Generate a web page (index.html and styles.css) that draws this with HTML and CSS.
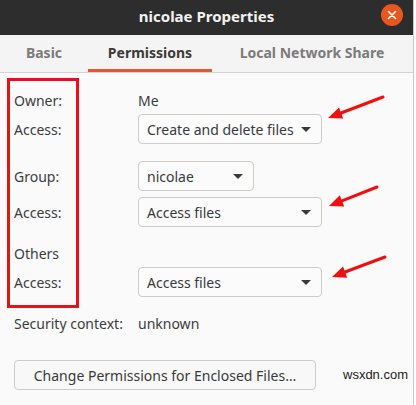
FILE: index.html
```html
<!DOCTYPE html>
<html lang="en">
  <head>
    <meta charset="UTF-8" />
    <title>nicolae Properties</title>
    <link rel="stylesheet" href="styles.css">
  </head>
  <body>
    <div class="window">
      <!-- title bar -->
      <div class="titlebar">
        <span class="title">nicolae Properties</span>
        <span class="close">
          <svg width="10" height="10" viewBox="0 0 10 10">
            <path d="M1.5 1.5 L8.5 8.5 M8.5 1.5 L1.5 8.5" stroke="#fff" stroke-width="1.6" stroke-linecap="round" />
          </svg>
        </span>
      </div>

      <!-- tabs -->
      <div class="tabs">
        <span class="tab tab-basic">Basic</span>
        <span class="tab tab-perm active">Permissions</span>
        <span class="tab tab-share">Local Network Share</span>
      </div>

      <div class="content">
        <div class="row row-owner">
          <span class="label">Owner:</span>
          <span class="value">Me</span>
        </div>
        <div class="row row-access1">
          <span class="label">Access:</span>
          <span class="combo combo-auto">Create and delete files<i class="arrow"></i></span>
        </div>
        <div class="row row-group">
          <span class="label">Group:</span>
          <span class="combo combo-small">nicolae<i class="arrow"></i></span>
        </div>
        <div class="row row-access2">
          <span class="label">Access:</span>
          <span class="combo combo-wide">Access files<i class="arrow"></i></span>
        </div>
        <div class="row row-others">
          <span class="label">Others</span>
        </div>
        <div class="row row-access3">
          <span class="label">Access:</span>
          <span class="combo combo-wide">Access files<i class="arrow"></i></span>
        </div>
        <div class="row row-security">
          <span class="label">Security context:</span>
          <span class="value">unknown</span>
        </div>
        <div class="btn-row">
          <span class="btn">Change Permissions for Enclosed Files…</span>
        </div>
      </div>

      <span class="watermark">wsxdn.com</span>
    </div>

    <!-- annotations -->
    <div class="redbox"></div>
    <svg class="arrows" width="416" height="405" viewBox="0 0 416 405">
      <line x1="383" y1="97" x2="341" y2="113" />
      <polygon points="328,118 343.2,118.6 339,107.4" />
      <line x1="377" y1="187" x2="342" y2="200.8" />
      <polygon points="329,206 344.2,206.4 339.8,195.2" />
      <line x1="385" y1="257" x2="345" y2="272" />
      <polygon points="332,277 347.2,277.7 343,266.5" />
    </svg>
  </body>
</html>
```

FILE: styles.css
```css
* {
  margin: 0;
  padding: 0;
  box-sizing: border-box;
}
body {
  width: 416px;
  height: 405px;
  background: #ffffff;
  font-family: "Noto Sans", "DejaVu Sans", sans-serif;
  font-size: 14px;
  color: #3d3d3d;
  position: relative;
  overflow: hidden;
}
.window {
  width: 414px;
  height: 405px;
  background: #fafafa;
  border-right: 1px solid #c9c9c9;
  position: relative;
}

/* title bar */
.titlebar {
  height: 35px;
  background: #2d2d2d;
  display: flex;
  align-items: center;
  justify-content: center;
  position: relative;
}
.title {
  color: #f2f2f2;
  font-weight: bold;
  font-size: 15px;
  margin-top: -4px;
}
.close {
  position: absolute;
  left: 381px;
  top: 4px;
  width: 22px;
  height: 22px;
  border-radius: 50%;
  background: #e9571f;
  display: flex;
  align-items: center;
  justify-content: center;
}

/* tabs */
.tabs {
  height: 38px;
  background: #f4f4f4;
  border-bottom: 1px solid #d3d3d3;
  display: flex;
  align-items: stretch;
}
.tab {
  display: flex;
  align-items: center;
  justify-content: center;
  font-weight: bold;
  font-size: 14px;
  color: #7b7b7b;
  border-bottom: 3px solid transparent;
  padding-top: 1px;
}
.tab-basic {
  width: 88px;
}
.tab-perm {
  width: 124px;
}
.tab-share {
  width: 200px;
}
.tab.active {
  color: #3b3b3b;
  border-bottom-color: #e05a2b;
}

/* content */
.content {
  padding: 16px 0 0 14px;
}
.row {
  display: flex;
  align-items: center;
}
.label {
  width: 124px;
  flex-shrink: 0;
}
.row-owner {
  height: 22px;
}
.row-access1 {
  height: 30px;
  margin-top: 3px;
}
.row-group {
  height: 30px;
  margin-top: 17px;
}
.row-access2 {
  height: 30px;
  margin-top: 6px;
}
.row-others {
  height: 22px;
  margin-top: 15px;
}
.row-access3 {
  height: 30px;
  margin-top: 3px;
}
.row-security {
  height: 22px;
  margin-top: 15px;
}

.combo {
  height: 30px;
  border: 1px solid #cfcbc7;
  border-radius: 4px;
  background: #fbfbfb;
  display: flex;
  align-items: center;
  justify-content: space-between;
  padding: 0 10px 0 8px;
  color: #3a3a3a;
}
.combo-auto {
  width: 184px;
}
.combo-small {
  width: 116px;
}
.combo-wide {
  width: 184px;
}
.arrow {
  width: 0;
  height: 0;
  border-left: 5px solid transparent;
  border-right: 5px solid transparent;
  border-top: 5px solid #3a3a3a;
  margin-left: 6px;
}

.btn-row {
  margin-top: 26px;
}
.btn {
  display: inline-flex;
  align-items: center;
  justify-content: center;
  width: 302px;
  height: 30px;
  border: 1px solid #cfcbc7;
  border-radius: 4px;
  background: #f8f8f8;
  color: #3a3a3a;
}

.watermark {
  position: absolute;
  left: 343px;
  top: 367px;
  font-family: "Liberation Sans", Arial, sans-serif;
  font-size: 13px;
  color: #1a1a1a;
}

/* annotations */
.redbox {
  position: absolute;
  left: 7px;
  top: 78px;
  width: 72px;
  height: 230px;
  border: 3px solid #e8101a;
}
.arrows {
  position: absolute;
  left: 0;
  top: 0;
}
.arrows line {
  stroke: #ee1010;
  stroke-width: 3;
  stroke-linecap: round;
}
.arrows polygon {
  fill: #ee1010;
}
```
